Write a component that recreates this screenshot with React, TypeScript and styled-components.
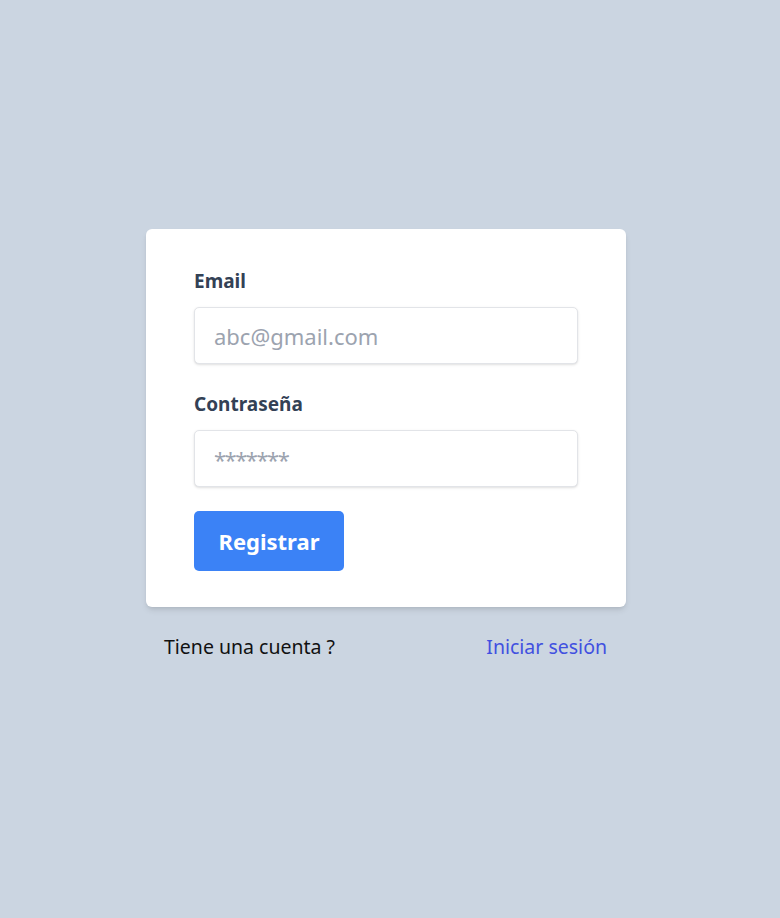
import React from "react";
import styled, { createGlobalStyle } from "styled-components";

const Global = createGlobalStyle`
  html, body { margin: 0; padding: 0; }
  body {
    background: #cbd5e1;
    font-family: "Noto Sans", "Open Sans", "Liberation Sans", sans-serif;
  }
  * { box-sizing: border-box; }
`;

const Page = styled.div`
  min-height: 918px;
  display: flex;
  flex-direction: column;
  align-items: center;
  padding-top: 229px;
  padding-right: 8px;
`;

const Wrapper = styled.div`
  width: 480px;
  display: flex;
  flex-direction: column;
`;

const Card = styled.form`
  background: #ffffff;
  border-radius: 6px;
  box-shadow: 0 4px 6px -1px rgba(0, 0, 0, 0.1), 0 2px 4px -2px rgba(0, 0, 0, 0.1);
  padding: 38px 48px 36px;
  display: flex;
  flex-direction: column;
`;

const Field = styled.div<{ $mb: number }>`
  display: flex;
  flex-direction: column;
  margin-bottom: ${(p) => p.$mb}px;
`;

const Label = styled.label`
  font-size: 19px;
  line-height: 28px;
  font-weight: 700;
  color: #334155;
  margin-bottom: 12px;
`;

const Input = styled.input<{ $tight?: boolean }>`
  width: 100%;
  height: 57px;
  border: 1px solid #e2e4e8;
  border-radius: 5px;
  box-shadow: 0 1px 3px 0 rgba(0, 0, 0, 0.1), 0 1px 2px -1px rgba(0, 0, 0, 0.1);
  padding: 0 19px;
  font-family: inherit;
  font-size: 22px;
  color: #374151;
  outline: none;
  letter-spacing: ${(p) => (p.$tight ? "-1.5px" : "0")};
  &::placeholder { color: #9ca3af; }
`;

const Button = styled.button`
  align-self: flex-start;
  width: 150px;
  height: 60px;
  border: none;
  border-radius: 5px;
  background: #3b82f6;
  color: #ffffff;
  font-family: inherit;
  font-size: 22px;
  font-weight: 700;
  cursor: pointer;
`;

const Footer = styled.div`
  display: flex;
  justify-content: space-between;
  align-items: center;
  padding: 0 19px 0 18px;
  margin-top: 26px;
  font-size: 19.5px;
  line-height: 28px;
`;

const Question = styled.span`
  color: #111111;
`;

const Link = styled.a`
  color: #4150e0;
  text-decoration: none;
  cursor: pointer;
`;

export default function App() {
  return (
    <>
      <Global />
      <Page>
        <Wrapper>
          <Card onSubmit={(e) => e.preventDefault()}>
            <Field $mb={26}>
              <Label htmlFor="email">Email</Label>
              <Input id="email" type="email" placeholder="abc@gmail.com" />
            </Field>
            <Field $mb={24}>
              <Label htmlFor="password">Contraseña</Label>
              <Input id="password" type="password" placeholder="*******" $tight />
            </Field>
            <Button type="submit">Registrar</Button>
          </Card>
          <Footer>
            <Question>Tiene una cuenta ?</Question>
            <Link>Iniciar sesión</Link>
          </Footer>
        </Wrapper>
      </Page>
    </>
  );
}
